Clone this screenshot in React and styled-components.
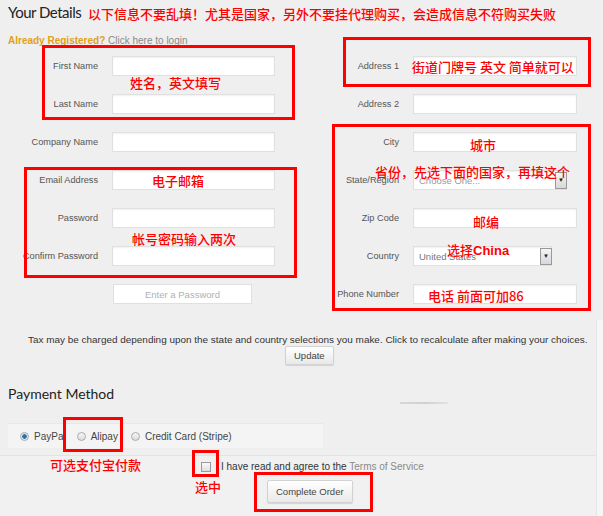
import styled, { createGlobalStyle } from "styled-components";

const GlobalStyle = createGlobalStyle`
  html, body {
    margin: 0;
    padding: 0;
    background: #efefef;
    overflow: hidden;
  }
`;

const Page = styled.div`
  position: relative;
  width: 603px;
  height: 516px;
  background: #efefef;
  font-family: "Liberation Sans", Arial, sans-serif;
  color: #333;
  overflow: hidden;
`;

const Title = styled.h1`
  margin: 0;
  padding: 3px 0 0 8px;
  height: 18px;
  font-family: Lato, "Liberation Sans", sans-serif;
  font-size: 15px;
  line-height: 18px;
  font-weight: 400;
  letter-spacing: -0.5px;
  color: #222;
`;

const LoginLine = styled.div`
  margin-top: 14px;
  padding-left: 8px;
  font-size: 10px;
  line-height: 12px;
  color: #8a8a8a;
`;

const Gold = styled.span`
  color: #e0a01c;
  font-weight: 700;
`;

const FormGrid = styled.div`
  display: grid;
  grid-template-columns: 112px 163px 138px 164px;
  grid-auto-rows: 38px;
  align-items: center;
`;

const Label = styled.div`
  padding-right: 14px;
  text-align: right;
  font-size: 9.2px;
  color: #555;
  white-space: nowrap;
`;

const Input = styled.div`
  box-sizing: border-box;
  width: ${(p) => p.$w || "100%"};
  height: 20px;
  background: #fff;
  border: 1px solid #e0e0e0;
  box-shadow: inset 0 1px 2px rgba(0, 0, 0, 0.06);
`;

const Select = styled(Input)`
  display: flex;
  align-items: center;
  justify-content: space-between;
  padding-left: 5px;
  font-size: 9.5px;
  color: ${(p) => p.$color || "#999"};
`;

const Arrow = styled.div`
  box-sizing: border-box;
  width: 12px;
  height: 17px;
  margin-right: -1px;
  display: flex;
  align-items: center;
  justify-content: center;
  background: linear-gradient(#f4f4f4, #d8d8d8);
  border: 1px solid #999;
  font-size: 6px;
  color: #222;
`;

const GhostButton = styled.div`
  box-sizing: border-box;
  width: 139px;
  height: 20px;
  margin-left: 1px;
  display: flex;
  align-items: center;
  justify-content: center;
  background: #fff;
  border: 1px solid #e0e0e0;
  font-size: 9.5px;
  color: #b0b0b0;
`;

const TaxNote = styled.div`
  margin-top: 21px;
  padding-left: 28px;
  font-size: 9.95px;
  line-height: 12px;
  color: #333;
  white-space: nowrap;
`;

const ButtonRow = styled.div`
  display: flex;
  padding-left: ${(p) => p.$left}px;
  margin-top: ${(p) => p.$top}px;
`;

const Button = styled.div`
  box-sizing: border-box;
  height: ${(p) => p.$h}px;
  padding: 0 ${(p) => p.$pad}px;
  display: flex;
  align-items: center;
  background: linear-gradient(#ffffff, #e9e9e9);
  border: 1px solid #d2d2d2;
  border-radius: 2px;
  box-shadow: 0 1px 1px rgba(0, 0, 0, 0.12);
  font-size: 9.5px;
  color: #444;
`;

const PaymentHead = styled.div`
  display: flex;
  align-items: flex-end;
  margin-top: 20px;
  padding-left: 8px;
`;

const PaymentTitle = styled.h2`
  margin: 0;
  height: 18px;
  font-family: Lato, "Liberation Sans", sans-serif;
  font-size: 14px;
  line-height: 18px;
  font-weight: 400;
  color: #222;
`;

const FadedTab = styled.div`
  width: 48px;
  height: 2px;
  margin: 0 0 -1px 286px;
  background: linear-gradient(90deg, #d8d8d8, #cfcfcf, #e2e2e2);
`;

const MethodPanel = styled.div`
  box-sizing: border-box;
  width: 315px;
  height: 25px;
  margin: 20px 0 0 8px;
  display: flex;
  align-items: center;
  gap: 7px;
  padding-left: 12px;
  background: #f4f4f4;
  border-top: 1px solid #e8e8e8;
`;

const Method = styled.label`
  display: flex;
  align-items: center;
  gap: 5px;
  font-size: 10px;
  color: #444;
  margin-right: ${(p) => p.$gap || 0}px;
`;

const Radio = styled.span`
  box-sizing: border-box;
  width: 9px;
  height: 9px;
  border-radius: 50%;
  border: 1px solid #aaa;
  background: ${(p) =>
    p.$on
      ? "radial-gradient(circle, #2f6fa8 0 2px, #dfe6ee 2.5px)"
      : "linear-gradient(#f6f6f6, #dcdcdc)"};
`;

const Divider = styled.div`
  margin-top: 7px;
  height: 1px;
  background: #e3e3e3;
`;

const Lower = styled.div`
  background: #f1f1f1;
  height: 60px;
`;

const TermsRow = styled.div`
  display: flex;
  align-items: center;
  gap: 10px;
  padding: 5px 0 0 201px;
  font-size: 10px;
  color: #333;
`;

const Checkbox = styled.span`
  box-sizing: border-box;
  width: 10px;
  height: 10px;
  border: 1px solid #999;
  background: linear-gradient(#fafafa, #dedede);
`;

const Faint = styled.span`
  color: #8a8a8a;
`;

const RightEdge = styled.div`
  position: absolute;
  top: 320px;
  right: 0;
  width: 6px;
  height: 196px;
  background: #f6f6f6;
  border-left: 1px solid #e6e6e6;
`;

/* red markup drawn on top of the screenshot */
const Mark = styled.div`
  position: absolute;
  box-sizing: border-box;
  left: ${(p) => p.$x}px;
  top: ${(p) => p.$y}px;
  width: ${(p) => p.$w}px;
  height: ${(p) => p.$h}px;
  border: 3px solid #f00;
  pointer-events: none;
`;

const Note = styled.div`
  position: absolute;
  left: ${(p) => p.$x}px;
  top: ${(p) => p.$y}px;
  font-family: "Noto Sans CJK SC", "Liberation Sans", sans-serif;
  font-size: 13px;
  font-weight: 500;
  line-height: 15px;
  color: #f00;
  white-space: nowrap;
  b {
    font-family: "Liberation Sans", sans-serif;
    font-weight: 700;
  }
`;

const marks = [
  [42, 45, 253, 75],
  [343, 37, 248, 50],
  [24, 167, 273, 111],
  [332, 124, 259, 187],
  [63, 417, 60, 35],
  [192, 450, 27, 27],
  [254, 472, 119, 40],
];

const notes = [
  [88, 6, "以下信息不要乱填！尤其是国家，另外不要挂代理购买，会造成信息不符购买失败"],
  [130, 75, "姓名，英文填写"],
  [412, 59, "街道门牌号 英文 简单就可以"],
  [152, 173, "电子邮箱"],
  [132, 231, "帐号密码输入两次"],
  [470, 137, "城市"],
  [375, 164, "省份，先选下面的国家，再填这个"],
  [473, 214, "邮编"],
  [447, 242, <>选择<b>China</b></>],
  [428, 288, "电话 前面可加86"],
  [50, 457, "可选支付宝付款"],
  [195, 479, "选中"],
];

function Field({ label, children }) {
  return (
    <>
      <Label>{label}</Label>
      <div>{children || <Input />}</div>
    </>
  );
}

export default function App() {
  return (
    <Page>
      <GlobalStyle />
      <Title>Your Details</Title>
      <LoginLine>
        <Gold>Already Registered?</Gold> Click here to login
      </LoginLine>

      <FormGrid>
        <Field label="First Name" />
        <Field label="Address 1" />
        <Field label="Last Name" />
        <Field label="Address 2" />
        <Field label="Company Name" />
        <Field label="City" />
        <Field label="Email Address" />
        <Field label="State/Region">
          <Select $w="154px">
            Choose One...
            <Arrow>▼</Arrow>
          </Select>
        </Field>
        <Field label="Password" />
        <Field label="Zip Code" />
        <Field label="Confirm Password" />
        <Field label="Country">
          <Select $w="139px" $color="#777">
            United States
            <Arrow>▼</Arrow>
          </Select>
        </Field>
        <div />
        <div>
          <GhostButton>Enter a Password</GhostButton>
        </div>
        <Field label="Phone Number" />
      </FormGrid>

      <TaxNote>
        Tax may be charged depending upon the state and country selections you
        make. Click to recalculate after making your choices.
      </TaxNote>
      <ButtonRow $left={285} $top={0}>
        <Button $h={19} $pad={8}>Update</Button>
      </ButtonRow>

      <PaymentHead>
        <PaymentTitle>Payment Method</PaymentTitle>
        <FadedTab />
      </PaymentHead>

      <MethodPanel>
        <Method $gap={4}>
          <Radio $on />
          PayPal
        </Method>
        <Method $gap={6}>
          <Radio />
          Alipay
        </Method>
        <Method>
          <Radio />
          Credit Card (Stripe)
        </Method>
      </MethodPanel>
      <Divider />
      <Lower>
        <TermsRow>
          <Checkbox />
          <span>
            I have read and agree to the <Faint>Terms of Service</Faint>
          </span>
        </TermsRow>
        <ButtonRow $left={267} $top={8}>
          <Button $h={23} $pad={8}>Complete Order</Button>
        </ButtonRow>
      </Lower>
      <RightEdge />

      {marks.map(([x, y, w, h], i) => (
        <Mark key={i} $x={x} $y={y} $w={w} $h={h} />
      ))}
      {notes.map(([x, y, text], i) => (
        <Note key={i} $x={x} $y={y}>
          {text}
        </Note>
      ))}
    </Page>
  );
}
